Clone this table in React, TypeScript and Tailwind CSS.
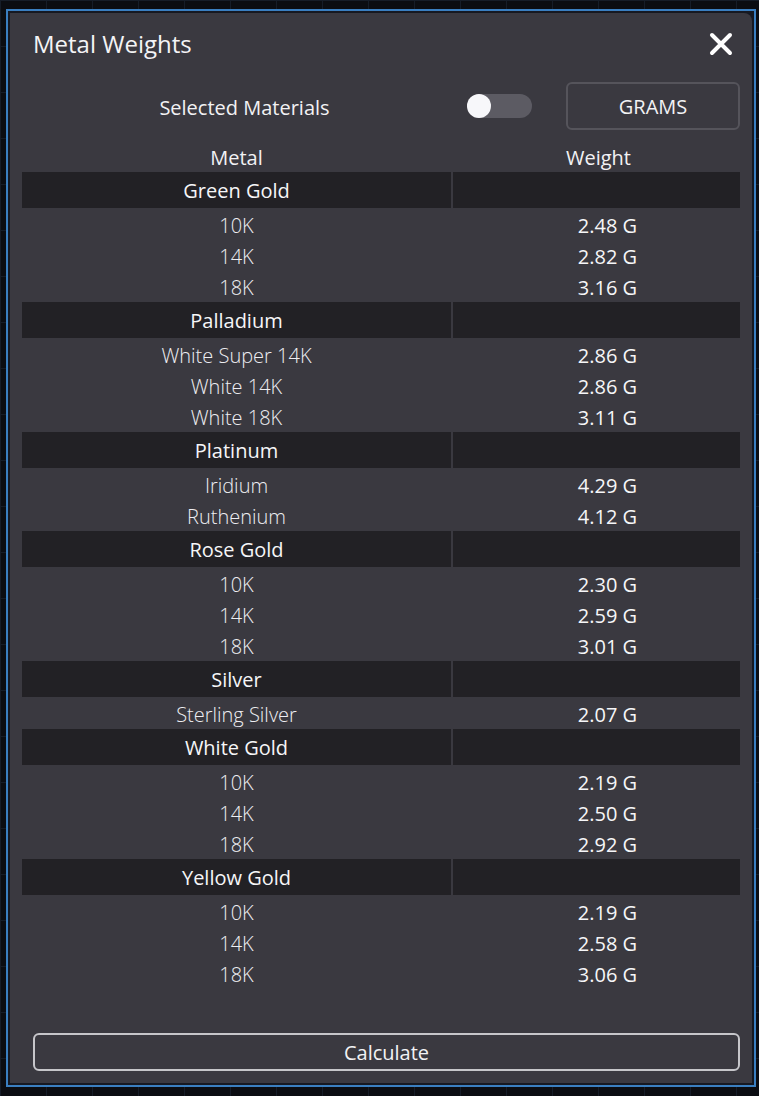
const metalGroups = [
  {
    name: 'Green Gold',
    items: [
      { label: '10K', weight: '2.48 G' },
      { label: '14K', weight: '2.82 G' },
      { label: '18K', weight: '3.16 G' },
    ],
  },
  {
    name: 'Palladium',
    items: [
      { label: 'White Super 14K', weight: '2.86 G' },
      { label: 'White 14K', weight: '2.86 G' },
      { label: 'White 18K', weight: '3.11 G' },
    ],
  },
  {
    name: 'Platinum',
    items: [
      { label: 'Iridium', weight: '4.29 G' },
      { label: 'Ruthenium', weight: '4.12 G' },
    ],
  },
  {
    name: 'Rose Gold',
    items: [
      { label: '10K', weight: '2.30 G' },
      { label: '14K', weight: '2.59 G' },
      { label: '18K', weight: '3.01 G' },
    ],
  },
  {
    name: 'Silver',
    items: [{ label: 'Sterling Silver', weight: '2.07 G' }],
  },
  {
    name: 'White Gold',
    items: [
      { label: '10K', weight: '2.19 G' },
      { label: '14K', weight: '2.50 G' },
      { label: '18K', weight: '2.92 G' },
    ],
  },
  {
    name: 'Yellow Gold',
    items: [
      { label: '10K', weight: '2.19 G' },
      { label: '14K', weight: '2.58 G' },
      { label: '18K', weight: '3.06 G' },
    ],
  },
];

const App = () => {
  return (
    <div className="w-full min-h-[1096px] bg-[#0b0d12] bg-[linear-gradient(to_right,#161d28_1px,transparent_1px),linear-gradient(to_bottom,#161d28_1px,transparent_1px)] bg-[size:46px_46px] pt-[9px] pl-[6px] font-['Open_Sans','Noto_Sans',sans-serif] text-white">
      <div className="w-[750px] h-[1078px] border-2 border-[#3a7fc1] bg-[#161922] p-[2px]">
        <div className="h-full flex flex-col bg-[#3a3940] rounded-tr-lg pb-[12px]">
          {/* header */}
          <div className="flex items-center justify-between pl-[23px] pr-[19px] pt-[15px]">
            <h1 className="text-[24px] leading-[32px] text-[#f4f4f6]">Metal Weights</h1>
            <svg width="24" height="24" viewBox="0 0 24 24" className="text-white">
              <path d="M3 3 L21 21 M21 3 L3 21" stroke="currentColor" strokeWidth="4" strokeLinecap="round" />
            </svg>
          </div>

          {/* controls */}
          <div className="mx-[12px] mt-[22px] h-[48px] flex items-center">
            <div className="flex-1 text-center text-[20px] pt-[3px] text-[#f2f2f4]">Selected Materials</div>
            <div className="w-[65px] h-[24px] rounded-full bg-[#5c5b63] flex items-center">
              <div className="w-[24px] h-[24px] rounded-full bg-[#f7f7fa]" />
            </div>
            <button className="ml-[34px] w-[174px] h-[48px] pt-[2px] rounded-md border-2 border-[#55545b] text-[20px] text-[#f2f2f4]">
              GRAMS
            </button>
          </div>

          {/* table */}
          <div className="mx-[12px] mt-[12px] text-[20px]">
            <div className="grid grid-cols-[429px_287px] gap-x-[2px] h-[30px] pt-[1px] items-center text-[#f2f2f4]">
              <div className="text-center">Metal</div>
              <div className="text-center pl-[4px]">Weight</div>
            </div>
            {metalGroups.map((group) => (
              <div key={group.name}>
                <div className="grid grid-cols-[429px_287px] gap-x-[2px] h-[36px] mb-px">
                  <div className="bg-[#222125] flex items-center justify-center pt-[2px] font-medium text-[#f6f6f8]">
                    {group.name}
                  </div>
                  <div className="bg-[#222125]" />
                </div>
                {group.items.map((item, i) => (
                  <div key={i} className="grid grid-cols-[429px_287px] gap-x-[2px] h-[31px] pt-[2px] items-center">
                    <div className="text-center font-light text-[#eeeef2]">{item.label}</div>
                    <div className="text-center pl-[22px] text-[#f6f6f8]">{item.weight}</div>
                  </div>
                ))}
              </div>
            ))}
          </div>

          <button className="mt-auto ml-[23px] mr-[12px] h-[38px] pt-[2px] rounded-md border-2 border-[#c6c6ca] text-[20px] text-[#f2f2f4]">
            Calculate
          </button>
        </div>
      </div>
    </div>
  );
};

export default App;
